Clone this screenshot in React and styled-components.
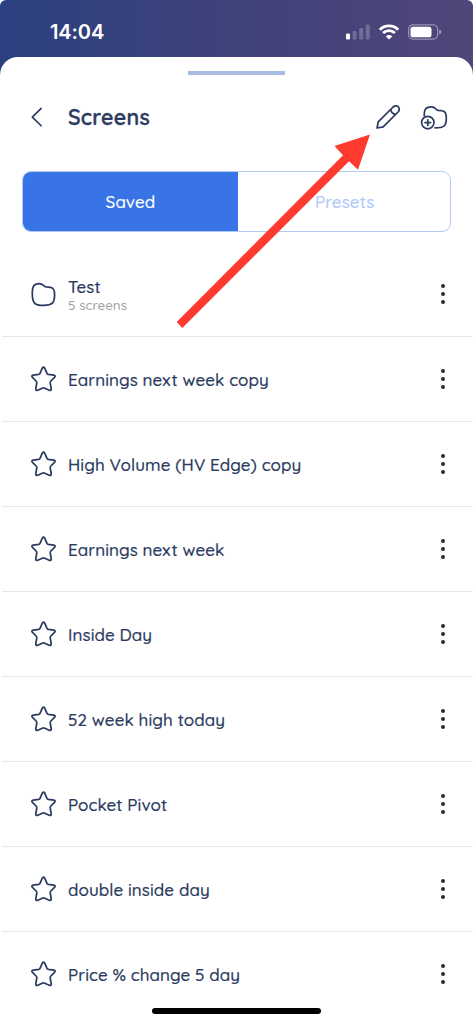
import React from 'react';
import styled, { createGlobalStyle } from 'styled-components';

const NAVY = '#2b3a60';

const GlobalStyle = createGlobalStyle`
  *, *::before, *::after { box-sizing: border-box; }
  html, body { margin: 0; padding: 0; background: #fff; }
  button { font: inherit; color: inherit; background: none; border: 0; padding: 0; }
`;

const Screen = styled.div`
  position: relative;
  width: 473px;
  height: 1024px;
  overflow: hidden;
  border-radius: 6px 6px 0 0;
  background: linear-gradient(90deg, #2b4080 0%, #3f427a 48%, #50467a 100%) top / 100% 90px no-repeat;
  font-family: Quicksand, Lato, 'Open Sans', sans-serif;
  color: ${NAVY};
`;

const StatusBar = styled.header`
  display: flex;
  justify-content: space-between;
  align-items: center;
  height: 57px;
  padding: 6px 31px 0 50px;
  color: #fff;
`;

const Clock = styled.span`
  font: 600 20px/24px Inter, sans-serif;
  letter-spacing: -0.1px;
`;

const StatusIcons = styled.svg`
  display: block;
  width: 96px;
  height: 16px;
`;

const Sheet = styled.main`
  height: 967px;
  background: #fff;
  border-radius: 18px 18px 0 0;
  padding-top: 14px;
`;

const Grabber = styled.div`
  width: 97px;
  height: 4px;
  margin: 0 auto;
  background: #a8bbe5;
`;

const TitleBar = styled.div`
  display: flex;
  align-items: center;
  height: 44px;
  margin-top: 20px;
  padding: 0 25px 0 30px;
`;

const IconButton = styled.button`
  display: flex;
  width: ${(p) => p.$w}px;
  margin-left: ${(p) => p.$gap || 0}px;
`;

const Icon = styled.svg`
  display: block;
  flex: none;
  fill: none;
  stroke: ${NAVY};
  stroke-width: ${(p) => p.$weight || 1.75};
  stroke-linecap: round;
  stroke-linejoin: round;
`;

const Title = styled.h1`
  flex: 1;
  margin: 0 0 0 24px;
  font-size: 21.5px;
  font-weight: 600;
  line-height: 28px;
  letter-spacing: 0.25px;
  -webkit-text-stroke: 0.35px currentColor;
`;

const Tabs = styled.div`
  display: flex;
  height: 61px;
  margin: 32px 22px 0;
  border: 1.5px solid #b2c9f8;
  border-radius: 9px;
  overflow: hidden;
`;

const Tab = styled.button`
  flex: ${(p) => (p.$active ? '0 0 215px' : '1')};
  padding-left: ${(p) => (p.$active ? 0 : 1.5)}px;
  background: ${(p) => (p.$active ? '#3974e6' : 'transparent')};
  color: ${(p) => (p.$active ? '#fff' : '#b0c9fa')};
  font-size: 17px;
  font-weight: 500;
  letter-spacing: 0.1px;
  -webkit-text-stroke: 0.15px currentColor;
`;

const List = styled.ul`
  list-style: none;
  margin: 20px 0 0;
  padding: 0 0 0 2px;
`;

const Row = styled.li`
  display: flex;
  align-items: center;
  height: 85px;
  padding: 0 27px 0 29px;
  border-bottom: 1px solid #e3e8f3;
  &:last-child { border-bottom-color: transparent; }
`;

const Labels = styled.div`
  flex: 1;
  display: flex;
  flex-direction: column;
  margin-left: 12px;
  padding-top: 2px;
`;

const Name = styled.span`
  font-size: 17px;
  font-weight: 500;
  line-height: 20px;
  white-space: nowrap;
  letter-spacing: 0.08px;
  -webkit-text-stroke: 0.2px currentColor;
`;

const Count = styled.span`
  font-size: 13.4px;
  font-weight: 500;
  line-height: 16px;
  color: #a0a0a0;
`;

const Dots = styled.span`
  display: flex;
  flex-direction: column;
  align-items: center;
  gap: 3.8px;
  width: 6px;
`;

const Dot = styled.i`
  width: 4px;
  height: 4px;
  border-radius: 50%;
  background: #252b3d;
`;

const HomeIndicator = styled.div`
  position: absolute;
  left: 152px;
  bottom: 10px;
  width: 169px;
  height: 6px;
  border-radius: 3px;
  background: #000;
`;

const Pointer = styled.svg`
  position: absolute;
  inset: 0;
  width: 473px;
  height: 1024px;
  pointer-events: none;
`;

const StarIcon = () => (
  <Icon width="25" height="26" viewBox="0 0 25 26">
    <path d="M11.3 2.2Q12.5 0.2 13.7 2.2L16 7.4Q16.4 8.2 17.3 8.4L22.8 9.2Q25 9.7 23.5 11.4L19.9 15Q19.1 15.8 19.2 16.9L20.2 22.7Q20.3 25 18.2 24.2L13.8 22.2Q12.5 21.6 11.2 22.2L6.8 24.2Q4.7 25 4.8 22.7L5.8 16.9Q5.9 15.8 5.1 15L1.5 11.4Q0 9.7 2.2 9.2L7.7 8.4Q8.6 8.2 9 7.4Z" />
  </Icon>
);

const FolderIcon = () => (
  <Icon width="25" height="26" viewBox="0 0 25 26">
    <path d="M1.3 12.6C1.3 5.4 2.6 2.6 8.3 2.6C12.4 2.6 12.2 5.4 15.2 5.9C21.4 6.1 23.6 7 23.6 13.8C23.6 22 21.3 24.4 12.5 24.4C3.6 24.4 1.3 22 1.3 12.6Z" />
  </Icon>
);

const rows = [
  { name: 'Test', count: '5 screens' },
  { name: 'Earnings next week copy' },
  { name: 'High Volume (HV Edge) copy' },
  { name: 'Earnings next week' },
  { name: 'Inside Day' },
  { name: '52 week high today' },
  { name: 'Pocket Pivot' },
  { name: 'double inside day' },
  { name: 'Price % change 5 day' },
];

export default function App() {
  return (
    <>
      <GlobalStyle />
      <Screen>
        <StatusBar>
          <Clock>14:04</Clock>
          <StatusIcons viewBox="0 0 96 16" fill="#fff">
            <rect x="0" y="9.5" width="4" height="6" rx="1.2" />
            <g opacity=".22">
              <rect x="6.6" y="7" width="4" height="8.5" rx="1.2" />
              <rect x="13.2" y="4" width="4" height="11.5" rx="1.2" />
              <rect x="19.8" y="0.6" width="4" height="14.9" rx="1.2" />
            </g>
            <g fill="none" stroke="#fff" strokeWidth="2.8">
              <path d="M33.8 5.7A13.1 13.1 0 0 1 52.2 5.7" />
              <path d="M37.1 9.1A8.4 8.4 0 0 1 48.9 9.1" />
            </g>
            <path d="M43 15.5L39.7 12.2Q43 9.6 46.3 12.2Z" />
            <rect x="62.6" y="0.9" width="29" height="14.2" rx="4.4" fill="none" stroke="#fff" strokeOpacity=".42" strokeWidth="1.2" />
            <rect x="64.5" y="2.7" width="21" height="10.6" rx="2.6" />
            <path d="M93.3 5.6Q95.4 6.5 95.4 8T93.3 10.4Z" opacity=".5" />
          </StatusIcons>
        </StatusBar>
        <Sheet>
          <Grabber />
          <TitleBar>
            <IconButton $w={14} aria-label="Back">
              <Icon width="14" height="20" viewBox="0 0 14 20" $weight={1.6}>
                <path d="M11.2 1.4L2.3 10.1L11.2 18.8" />
              </Icon>
            </IconButton>
            <Title>Screens</Title>
            <IconButton $w={26} aria-label="Edit">
              <Icon width="26" height="26" viewBox="0 0 26 26">
                <path d="M2.1 24L3.2 17.9L18.1 3C20.1 1.1 22.7 1.8 23.7 3.4C24.6 4.9 24.3 6.6 23.1 8L8.2 22.9Z M15.8 5.3C16.2 8.5 17.7 10 20.8 10.3" />
              </Icon>
            </IconButton>
            <IconButton $w={28} $gap={19} aria-label="New folder">
              <Icon width="28" height="26" viewBox="0 0 28 26">
                <path d="M4.2 11.8C4.2 5 5.9 2.9 11.4 2.9C15.8 2.9 15.2 5.7 18 6.3C24.4 6.4 26.3 7.6 26.3 14.2C26.3 22.4 23.8 23.8 15 23.8" />
                <circle cx="7.8" cy="18.6" r="6.2" />
                <path d="M7.8 15.8V21.4M5 18.6H10.6" />
              </Icon>
            </IconButton>
          </TitleBar>
          <Tabs>
            <Tab $active>Saved</Tab>
            <Tab>Presets</Tab>
          </Tabs>
          <List>
            {rows.map((row) => (
              <Row key={row.name}>
                {row.count ? <FolderIcon /> : <StarIcon />}
                <Labels>
                  <Name>{row.name}</Name>
                  {row.count && <Count>{row.count}</Count>}
                </Labels>
                <Dots>
                  <Dot />
                  <Dot />
                  <Dot />
                </Dots>
              </Row>
            ))}
          </List>
        </Sheet>
        <Pointer viewBox="0 0 473 1024">
          <path fill="#ff3b30" d="M176.7 322L343 155.2L334.5 146L370 134.5L358 169.8L349 161.3L182.3 328Z" />
        </Pointer>
        <HomeIndicator />
      </Screen>
    </>
  );
}
